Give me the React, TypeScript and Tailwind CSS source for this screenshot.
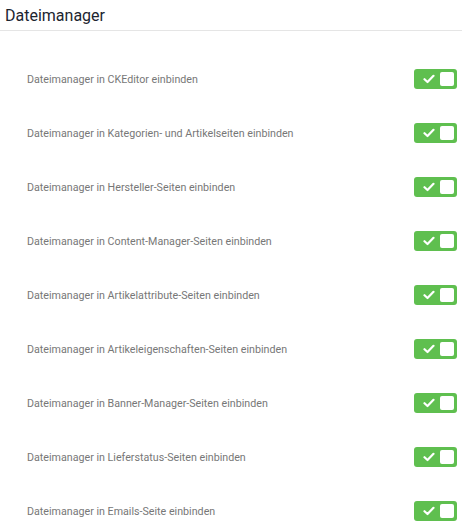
import React from "react";

const items = [
  "Dateimanager in CKEditor einbinden",
  "Dateimanager in Kategorien- und Artikelseiten einbinden",
  "Dateimanager in Hersteller-Seiten einbinden",
  "Dateimanager in Content-Manager-Seiten einbinden",
  "Dateimanager in Artikelattribute-Seiten einbinden",
  "Dateimanager in Artikeleigenschaften-Seiten einbinden",
  "Dateimanager in Banner-Manager-Seiten einbinden",
  "Dateimanager in Lieferstatus-Seiten einbinden",
  "Dateimanager in Emails-Seite einbinden",
];

function Toggle() {
  return (
    <div className="flex h-[20px] w-[43px] items-center rounded-[3px] bg-[#5fbf4f] px-[3px]">
      <div className="flex flex-1 items-center justify-center">
        <svg width="12" height="10" viewBox="0 0 12 10">
          <path d="M1.5 5.2 L4.5 8 L10.5 1.8" fill="none" stroke="#ffffff" strokeWidth="2.2" strokeLinecap="round" strokeLinejoin="round" />
        </svg>
      </div>
      <div className="h-[14px] w-[14px] rounded-[2px] bg-white" />
    </div>
  );
}

export default function App() {
  return (
    <div className="h-[527px] w-[462px] overflow-hidden bg-white" style={{ fontFamily: "Roboto, sans-serif" }}>
      <div className="flex h-[31px] items-center border-b border-[#e5e5e5] pl-[5px] pt-[2px]">
        <h1 className="text-[16px] leading-none text-[#1c2530]">Dateimanager</h1>
      </div>
      <div className="pt-[21px]">
        {items.map((t) => (
          <div key={t} className="flex h-[54px] items-center justify-between pl-[27px] pr-[5px]">
            <span className="pt-[2px] text-[10.7px] leading-none text-[#777777]">{t}</span>
            <Toggle />
          </div>
        ))}
      </div>
    </div>
  );
}
